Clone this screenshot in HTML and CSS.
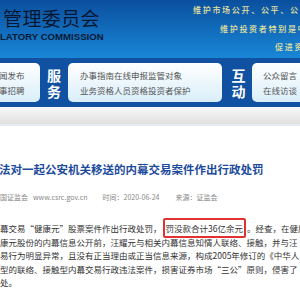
FILE: index.html
```html
<!DOCTYPE html>
<html lang="zh-CN">
<head>
    <meta charset="UTF-8">
    <meta name="viewport" content="width=device-width, initial-scale=1.0">
    <title>中国证券监督管理委员会</title>
    <link rel="stylesheet" href="styles.css">
</head>
<body>
    <header class="top">
        <div class="brand">
            <div class="brand-cn">管理委员会</div>
            <div class="brand-en">LATORY COMMISSION</div>
        </div>
        <div class="slogan">
            <p class="s1">维护市场公开、公平、公正</p>
            <p class="s2">维护投资者特别是中小投资者合法权益</p>
            <p class="s3">促进资本市场健康发展</p>
        </div>
    </header>

    <nav class="nav">
        <div class="panel panel-a">
            <a>闻发布</a>
            <a>事招聘</a>
        </div>
        <div class="label">服<br>务</div>
        <div class="panel panel-b">
            <div class="links"><a>办事指南</a><a>在线申报</a><a>监管对象</a></div>
            <div class="links"><a>业务资格</a><a>人员资格</a><a>投资者保护</a></div>
        </div>
        <div class="label label-2">互<br>动</div>
        <div class="panel panel-c">
            <a>公众留言</a>
            <a>在线访谈</a>
        </div>
    </nav>
    <div class="bar"></div>

    <div class="article">
        <h1 class="title">法对一起公安机关移送的内幕交易案件作出行政处罚</h1>
        <div class="meta">
            <span class="m-org">国证监会</span>
            <span class="m-site">www.csrc.gov.cn</span>
            <span class="m-time">时间：2020-06-24</span>
            <span>来源：证监会</span>
        </div>
        <p class="text">
            幕交易<span class="q">“</span>健康元<span class="q">”</span>股票案件作出行政处罚，<span class="hl">罚没款合计36亿余元</span>。经查，在健康元<br>
            康元股份的内幕信息公开前，汪耀元与相关内幕信息知情人联络、接触，并与汪<br>
            易行为明显异常，且没有正当理由或正当信息来源，构成2005年修订的《中华人<br>
            型的联络、接触型内幕交易行政违法案件，损害证券市场<span class="q">“</span>三公<span class="q">”</span>原则，侵害了<br>
            处。
        </p>
    </div>
</body>
</html>
```

FILE: styles.css
```css
body {
    margin: 0;
    width: 300px;
    height: 300px;
    overflow: hidden;
    background: #fff;
    font-family: "Noto Sans CJK SC", sans-serif;
}
p, h1 {
    margin: 0;
}

/* header */
.top {
    height: 58px;
    display: flex;
    overflow: hidden;
    background: linear-gradient(#0b4f9f, #1887d6);
}
.brand {
    flex: none;
    width: 190px;
    padding: 7px 0 0 3px;
    box-sizing: border-box;
}
.brand-cn {
    font-size: 19px;
    line-height: 22px;
    letter-spacing: 0.4px;
    color: #0a1730;
}
.brand-en {
    margin: 2px 0 0 -3px;
    font-family: "Liberation Sans", sans-serif;
    font-weight: bold;
    font-size: 9.6px;
    color: #0a1a35;
}
.slogan {
    flex: none;
    padding-top: 1px;
    padding-left: 3px;
    font-size: 8px;
    line-height: 18.5px;
    letter-spacing: 1.7px;
    font-weight: 500;
    color: #e6e29c;
    white-space: nowrap;
}
.s2 { margin-left: 27px; }
.s3 { margin-left: 82px; }

/* nav */
.nav {
    display: flex;
    height: 49px;
    padding: 5px 0;
    box-sizing: border-box;
    background: #1151a1;
}
.panel {
    flex: none;
    display: flex;
    flex-direction: column;
    justify-content: center;
    border-radius: 5px;
    background: linear-gradient(#ffffff, #d9eef9);
    font-size: 8.5px;
    line-height: 15px;
    color: #555;
    white-space: nowrap;
}
.panel-a {
    width: 48px;
    margin-left: -8px;
    padding-left: 7px;
    box-sizing: border-box;
}
.panel-b {
    width: 154px;
    padding-left: 12px;
    box-sizing: border-box;
}
.links {
    display: flex;
    gap: 0;
}
.panel-c {
    width: 60px;
    padding-left: 11px;
    box-sizing: border-box;
}
.label {
    flex: none;
    width: 28px;
    display: flex;
    align-items: center;
    justify-content: center;
    text-align: center;
    font-size: 14px;
    line-height: 16px;
    font-weight: bold;
    color: #fff;
}
.label-2 {
    width: 30px;
    padding-left: 3px;
    box-sizing: border-box;
}

.bar {
    height: 17px;
    background: linear-gradient(#f8f8f8, #e0e0e0);
    border-bottom: 2px solid #e4ebf3;
}

/* article */
.title {
    margin: 35px 0 0 -1px;
    font-size: 11.5px;
    line-height: 16px;
    font-weight: bold;
    color: #1d4b9c;
    white-space: nowrap;
}
.meta {
    display: flex;
    margin-top: 14px;
    font-size: 7px;
    line-height: 12px;
    color: #888;
    white-space: nowrap;
}
.m-org { margin-right: 5px; }
.m-site { margin-right: 15px; }
.m-time { margin-right: 16px; }
.text {
    margin-top: 19px;
    font-size: 8.5px;
    line-height: 13.5px;
    color: #333;
    white-space: nowrap;
}
.q {
    font-feature-settings: "fwid" 1;
}
.hl {
    padding: 2px 1px;
    margin: 0 1px;
    border: 2px solid #e33030;
    border-radius: 2px;
}
```
